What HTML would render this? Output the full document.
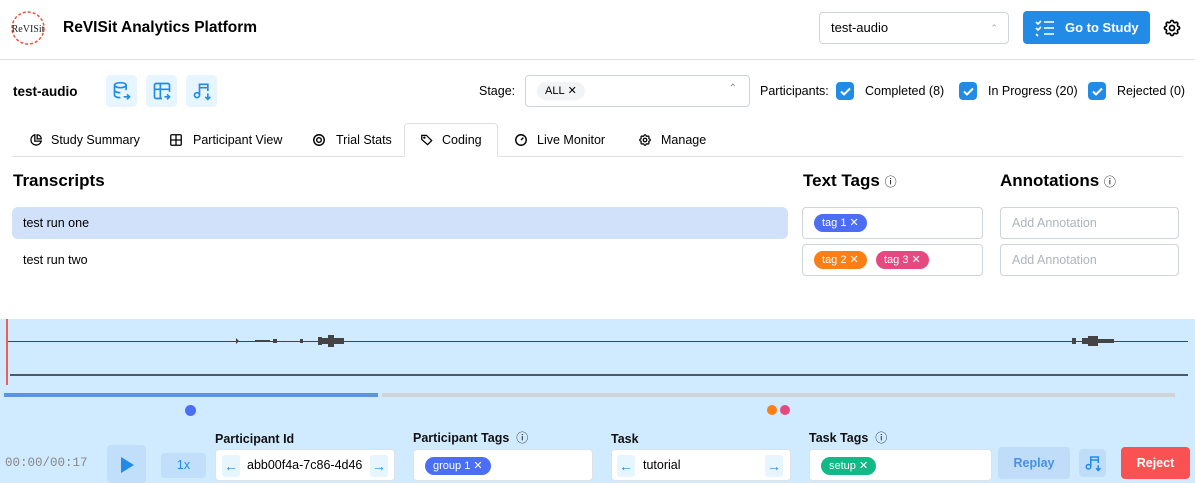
<!DOCTYPE html>
<html><head><meta charset="utf-8"><style>
*{box-sizing:border-box;margin:0;padding:0}
body{width:1195px;height:483px;position:relative;overflow:hidden;background:#fff;font-family:"Liberation Sans",sans-serif;color:#000;font-size:12.5px}
.a{position:absolute}
.inp{position:absolute;border:1px solid #ced4da;border-radius:4px;background:#fff}
.ib{position:absolute;background:#e7f5ff;border-radius:4px;display:flex;align-items:center;justify-content:center}
.cb{position:absolute;width:18px;height:18px;background:#228be6;border-radius:4px;display:flex;align-items:center;justify-content:center}
.chip{position:absolute;height:18px;border-radius:9px;color:#fff;font-size:11px;line-height:18px;padding:0 8px}
.tab{position:absolute;top:133px;font-size:12.5px}
.ti{position:absolute;top:133px}
.lbl{position:absolute;font-size:12.5px;font-weight:bold;color:#111}
.arr{position:absolute;width:18px;height:22px;background:#e7f5ff;border-radius:3px;color:#228be6;font-size:14px;text-align:center;line-height:22px}
</style></head><body>
<svg class="a" style="left:10px;top:10px" width="36" height="36" viewBox="0 0 36 36"><circle cx="18" cy="18" r="16" fill="none" stroke="#e8553c" stroke-width="1.5" stroke-dasharray="3 2"/><text x="18" y="22" font-size="10" text-anchor="middle" font-family="Liberation Serif" fill="#222">ReVISit</text></svg>
<div class="a" style="left:63px;top:19px;font-size:15.5px;font-weight:bold">ReVISit Analytics Platform</div>
<div class="inp" style="left:819px;top:12px;width:190px;height:32px;padding-left:11px;line-height:30px;font-size:13px">test-audio<span class="a" style="right:10px;top:0;color:#aaa;font-size:9px">⌃</span></div>
<div class="a" style="left:1023px;top:11px;width:127px;height:33px;background:#228be6;border-radius:4px;color:#fff;font-weight:bold;font-size:13px;line-height:33px;padding-left:42px">Go to Study</div>
<svg class="a" style="left:1035px;top:19px" width="20" height="18" viewBox="0 0 20 18" fill="none" stroke="#fff" stroke-width="1.6"><path d="M1 3l2 2 3-3M1 9l2 2 3-3M1 15l2 2"/><path d="M9 3h10M9 9h10M9 15h10"/></svg>
<svg class="a" style="left:1162px;top:18px" width="20" height="20" viewBox="0 0 24 24" fill="none" stroke="#000" stroke-width="2"><circle cx="12" cy="12" r="3"/><path d="M10.3 4.3c.4-1.8 3-1.8 3.4 0a1.7 1.7 0 0 0 2.6 1.1c1.5-.9 3.3.8 2.400 2.4a1.7 1.7 0 0 0 1 2.5c1.8.4 1.8 3 0 3.4a1.7 1.7 0 0 0-1 2.6c.9 1.5-.9 3.3-2.4 2.4a1.7 1.7 0 0 0-2.6 1c-.4 1.8-3 1.8-3.4 0a1.7 1.7 0 0 0-2.6-1c-1.5.9-3.300-.9-2.4-2.4a1.7 1.7 0 0 0-1-2.6c-1.8-.4-1.8-3 0-3.4a1.7 1.7 0 0 0 1-2.5c-.9-1.6.9-3.3 2.4-2.4 1 .6 2.3.1 2.6-1.1z"/></svg>
<div class="a" style="left:0;top:59px;width:1195px;height:1px;background:#dee2e6"></div>
<div class="a" style="left:13px;top:84px;font-weight:bold;font-size:13.5px">test-audio</div>
<div class="ib" style="left:106px;top:75px;width:31px;height:32px"><svg width="20" height="20" viewBox="0 0 24 24" fill="none" stroke="#228be6" stroke-width="2"><ellipse cx="10" cy="5" rx="7" ry="3"/><path d="M3 5v12c0 1.7 3 3 7 3M17 5v6M3 11c0 1.7 3 3 7 3M14 19h7M18 16l3 3-3 3"/></svg></div>
<div class="ib" style="left:146px;top:75px;width:31px;height:32px"><svg width="20" height="20" viewBox="0 0 24 24" fill="none" stroke="#228be6" stroke-width="2"><path d="M12 21H5a2 2 0 0 1-2-2V5a2 2 0 0 1 2-2h14a2 2 0 0 1 2 2v8M3 10h18M10 3v18M15 19h6M18 16l3 3-3 3"/></svg></div>
<div class="ib" style="left:186px;top:75px;width:31px;height:32px"><svg width="20" height="20" viewBox="0 0 24 24" fill="none" stroke="#228be6" stroke-width="2"><circle cx="6" cy="17" r="3"/><path d="M9 17V4h10v8M9 8h10M19 15v7M16 19l3 3 3-3"/></svg></div>
<div class="a" style="left:479px;top:84px">Stage:</div>
<div class="inp" style="left:525px;top:75px;width:225px;height:32px"><div class="a" style="left:11px;top:6px;height:18px;background:#f1f3f5;border-radius:9px;font-size:11px;line-height:18px;padding:0 8px">ALL&nbsp;✕</div><span class="a" style="right:12px;top:7px;color:#888;font-size:10px">⌃</span></div>
<div class="a" style="left:760px;top:84px">Participants:</div>
<div class="cb" style="left:836px;top:82px"><svg width="11" height="9" viewBox="0 0 11 9"><path d="M1 4.5l3 3 6-6" stroke="#fff" stroke-width="2" fill="none"/></svg></div>
<div class="a" style="left:865px;top:84px">Completed (8)</div>
<div class="cb" style="left:959px;top:82px"><svg width="11" height="9" viewBox="0 0 11 9"><path d="M1 4.5l3 3 6-6" stroke="#fff" stroke-width="2" fill="none"/></svg></div>
<div class="a" style="left:988px;top:84px">In Progress (20)</div>
<div class="cb" style="left:1088px;top:82px"><svg width="11" height="9" viewBox="0 0 11 9"><path d="M1 4.5l3 3 6-6" stroke="#fff" stroke-width="2" fill="none"/></svg></div>
<div class="a" style="left:1117px;top:84px">Rejected (0)</div>
<div class="a" style="left:12px;top:156px;width:1171px;height:1px;background:#dee2e6"></div>
<div class="a" style="left:404px;top:123px;width:94px;height:34px;border:1px solid #dee2e6;border-bottom:1px solid #fff;border-radius:4px 4px 0 0;background:#fff"></div>
<svg class="ti" style="left:29px" width="14" height="14" viewBox="0 0 24 24" fill="none" stroke="#000" stroke-width="2.2"><path d="M10 3a9 9 0 1 0 11 11H10z"/><path d="M14 3a7 7 0 0 1 7 7h-7z"/></svg>
<div class="tab" style="left:51px">Study Summary</div>
<svg class="ti" style="left:169px" width="14" height="14" viewBox="0 0 24 24" fill="none" stroke="#000" stroke-width="2.2"><rect x="3" y="3" width="18" height="18" rx="2"/><path d="M3 12h18M12 3v18"/></svg>
<div class="tab" style="left:193px">Participant View</div>
<svg class="ti" style="left:312px" width="14" height="14" viewBox="0 0 24 24" fill="none" stroke="#000" stroke-width="2.4"><circle cx="12" cy="12" r="9"/><circle cx="12" cy="12" r="4"/></svg>
<div class="tab" style="left:336px">Trial Stats</div>
<svg class="ti" style="left:420px" width="14" height="14" viewBox="0 0 24 24" fill="none" stroke="#000" stroke-width="2.2"><path d="M3 4h8l9 9-7 7-10-9z"/><circle cx="7.5" cy="8" r="1"/></svg>
<div class="tab" style="left:442px">Coding</div>
<svg class="ti" style="left:514px" width="14" height="14" viewBox="0 0 24 24" fill="none" stroke="#000" stroke-width="2.4"><circle cx="12" cy="12" r="9"/><path d="M12 12l4-4"/></svg>
<div class="tab" style="left:537px">Live Monitor</div>
<svg class="ti" style="left:638px" width="14" height="14" viewBox="0 0 24 24" fill="none" stroke="#000" stroke-width="2.2"><circle cx="12" cy="12" r="3"/><path d="M10.3 4.3c.4-1.8 3-1.8 3.4 0a1.7 1.7 0 0 0 2.6 1.1c1.5-.9 3.3.8 2.4 2.4a1.7 1.7 0 0 0 1 2.5c1.8.4 1.8 3 0 3.4a1.7 1.7 0 0 0-1 2.6c.9 1.5-.9 3.3-2.4 2.4a1.7 1.7 0 0 0-2.6 1c-.4 1.8-3 1.8-3.4 0a1.7 1.7 0 0 0-2.6-1c-1.5.9-3.3-.9-2.4-2.4a1.7 1.7 0 0 0-1-2.6c-1.8-.4-1.8-3 0-3.4a1.7 1.7 0 0 0 1-2.5c-.9-1.6.9-3.3 2.4-2.4 1 .6 2.3.1 2.6-1.1z"/></svg>
<div class="tab" style="left:661px">Manage</div>
<div class="a" style="left:13px;top:171px;font-size:17px;font-weight:bold">Transcripts</div>
<div class="a" style="left:12px;top:207px;width:776px;height:32px;background:#d0e1f9;border-radius:6px;padding-left:11px;line-height:32px">test run one</div>
<div class="a" style="left:23px;top:253px">test run two</div>
<div class="a" style="left:803px;top:171px;font-size:17px;font-weight:bold">Text Tags <span style="font-size:12px;font-weight:normal">ⓘ</span></div>
<div class="a" style="left:1000px;top:171px;font-size:17px;font-weight:bold">Annotations <span style="font-size:12px;font-weight:normal">ⓘ</span></div>
<div class="inp" style="left:802px;top:207px;width:181px;height:32px"><div class="chip" style="left:11px;top:6px;background:#4c6ef5">tag 1 ✕</div></div>
<div class="inp" style="left:802px;top:244px;width:181px;height:32px"><div class="chip" style="left:11px;top:6px;background:#fd7e14">tag 2 ✕</div><div class="chip" style="left:73px;top:6px;background:#e64980">tag 3 ✕</div></div>
<div class="inp" style="left:1000px;top:207px;width:179px;height:32px;padding-left:11px;line-height:30px;color:#adb5bd">Add Annotation</div>
<div class="inp" style="left:1000px;top:244px;width:179px;height:32px;padding-left:11px;line-height:30px;color:#adb5bd">Add Annotation</div>
<div class="a" style="left:0;top:319px;width:1195px;height:164px;background:#d0ebff"></div>
<div class="a" style="left:8px;top:341px;width:1180px;height:1px;background:#444"></div>
<svg class="a" style="left:230px;top:334px" width="120" height="14"><g fill="#444"><path d="M6 4l3 3-3 3zM25 6h15v2H25zM43 5h4v4h-4zM70 5h3v4h-3zM88 3h4v8h-4zM92 4h8v6h-8zM98 1h6v12h-6zM104 4h10v6h-10z"/></g></svg>
<svg class="a" style="left:1068px;top:334px" width="60" height="14"><g fill="#444"><path d="M4 4h4v6H4zM14 4h6v6h-6zM20 2h10v10H20zM30 5h16v4H30z"/></g></svg>
<div class="a" style="left:10px;top:374px;width:1178px;height:2px;background:#4a5a66"></div>
<div class="a" style="left:6px;top:319px;width:2px;height:66px;background:#e8605a"></div>
<div class="a" style="left:4px;top:393px;width:374px;height:4px;background:#5c93e6"></div>
<div class="a" style="left:382px;top:393px;width:793px;height:4px;background:#d0d4d8"></div>
<div class="a" style="left:185px;top:405px;width:11px;height:11px;border-radius:50%;background:#4c6ef5"></div>
<div class="a" style="left:767px;top:405px;width:10px;height:10px;border-radius:50%;background:#fd7e14"></div>
<div class="a" style="left:780px;top:405px;width:10px;height:10px;border-radius:50%;background:#e64980"></div>
<div class="a" style="left:5px;top:456px;font-family:'Liberation Mono',monospace;color:#888;font-size:12.5px">00:00/00:17</div>
<div class="a" style="left:107px;top:445px;width:39px;height:38px;background:#c1dffa;border-radius:4px"><svg class="a" style="left:14px;top:12px" width="13" height="16"><path d="M0 0l13 8-13 8z" fill="#228be6"/></svg></div>
<div class="a" style="left:161px;top:453px;width:45px;height:25px;background:#c1dffa;border-radius:4px;color:#228be6;text-align:center;line-height:25px">1x</div>
<div class="lbl" style="left:215px;top:432px">Participant Id</div>
<div class="inp" style="left:215px;top:449px;width:180px;height:32px;border-color:#dee2e6"><div class="arr" style="left:6px;top:5px">←</div><div class="a" style="left:31px;top:8px">abb00f4a-7c86-4d46</div><div class="arr" style="left:154px;top:5px">→</div></div>
<div class="lbl" style="left:413px;top:429px">Participant Tags&nbsp;&nbsp;<span style="font-weight:normal;font-size:12px">ⓘ</span></div>
<div class="inp" style="left:413px;top:449px;width:180px;height:32px;border-color:#dee2e6"><div class="chip" style="left:11px;top:7px;background:#4c6ef5">group 1 ✕</div></div>
<div class="lbl" style="left:611px;top:432px">Task</div>
<div class="inp" style="left:611px;top:449px;width:180px;height:32px;border-color:#dee2e6"><div class="arr" style="left:5px;top:5px">←</div><div class="a" style="left:31px;top:8px">tutorial</div><div class="arr" style="left:153px;top:5px">→</div></div>
<div class="lbl" style="left:809px;top:429px">Task Tags&nbsp;&nbsp;<span style="font-weight:normal;font-size:12px">ⓘ</span></div>
<div class="inp" style="left:809px;top:449px;width:183px;height:32px;border-color:#dee2e6"><div class="chip" style="left:11px;top:7px;background:#12b886">setup ✕</div></div>
<div class="a" style="left:998px;top:447px;width:72px;height:32px;background:#bfdcf8;border-radius:4px;color:#4a90e2;text-align:center;line-height:32px;font-weight:bold">Replay</div>
<div class="a" style="left:1079px;top:449px;width:27px;height:28px;background:#bfdcf8;border-radius:4px;display:flex;align-items:center;justify-content:center"><svg width="18" height="20" viewBox="0 0 24 24" fill="none" stroke="#228be6" stroke-width="2"><circle cx="6" cy="17" r="3"/><path d="M9 17V4h10v8M9 8h10M19 15v7M16 19l3 3 3-3"/></svg></div>
<div class="a" style="left:1121px;top:447px;width:69px;height:32px;background:#fa5252;border-radius:4px;color:#fff;text-align:center;line-height:32px;font-weight:bold">Reject</div>
</body></html>
